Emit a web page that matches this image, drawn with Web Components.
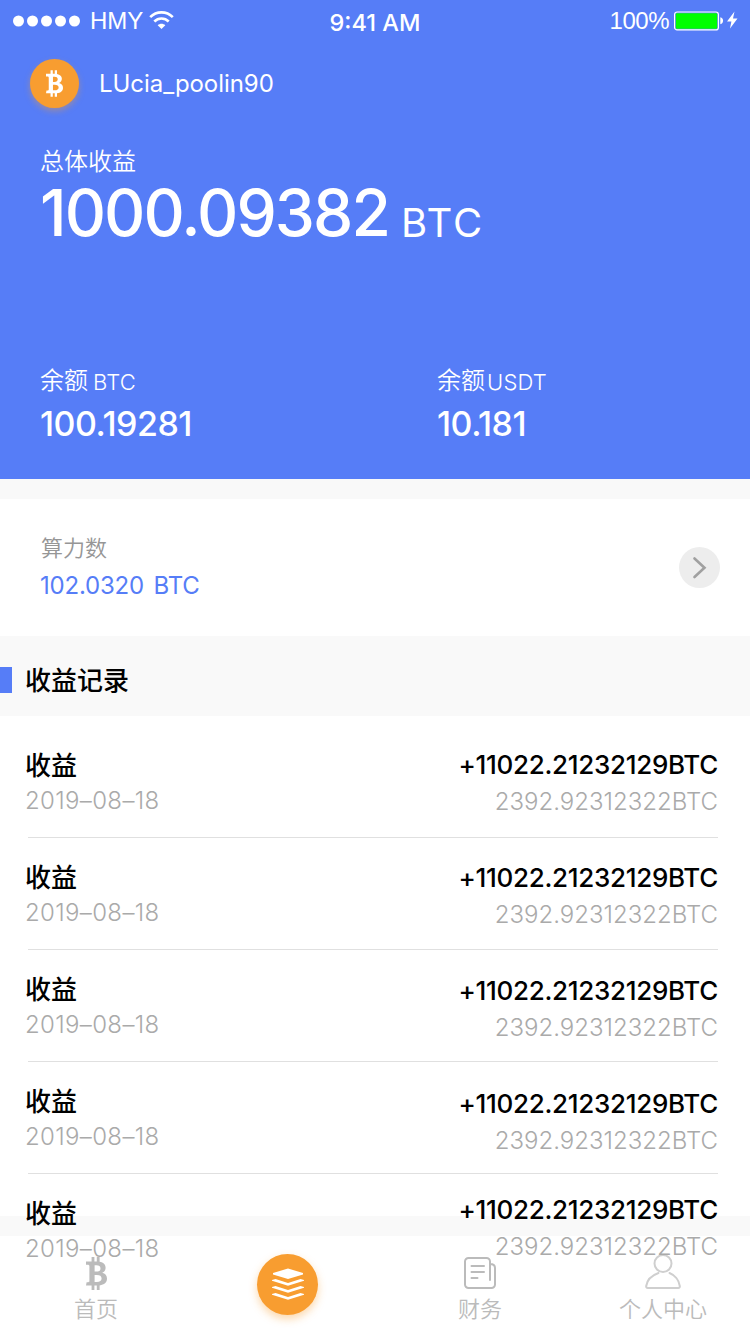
<!DOCTYPE html>
<html lang="zh-CN">
<head>
<meta charset="utf-8">
<title>收益</title>
<style>
  html, body {
    margin: 0;
    background: #fff;
  }

  body {
    width: 750px;
    height: 1334px;
    overflow: hidden;
    font-family: Inter, "Liberation Sans", sans-serif;
    --blue: #567df7;
    --orange: #f89d30;
    --panel: #f9f9f9;
    --cjk: "Noto Sans CJK SC", sans-serif;
  }
</style>
</head>
<body>
<wallet-page>
  <wallet-header slot="header" user="LUcia_poolin90" label="总体收益" total="1000.09382" unit="BTC">
    <wallet-balance label="余额" unit="BTC" gap="5" amount="100.19281"></wallet-balance>
    <wallet-balance label="余额" unit="USDT" gap="2" amount="10.181"></wallet-balance>
  </wallet-header>
  <hash-card slot="card" label="算力数">102.0320 BTC</hash-card>
  <section-title slot="title">收益记录</section-title>
  <income-row date="2019–08–18" amount="+11022.21232129BTC" sub="2392.92312322BTC">收益</income-row>
  <income-row date="2019–08–18" amount="+11022.21232129BTC" sub="2392.92312322BTC" style="--shift: 1px">收益</income-row>
  <income-row date="2019–08–18" amount="+11022.21232129BTC" sub="2392.92312322BTC" style="--shift: 2px">收益</income-row>
  <income-row date="2019–08–18" amount="+11022.21232129BTC" sub="2392.92312322BTC" style="--shift: 3px">收益</income-row>
  <income-row date="2019–08–18" amount="+11022.21232129BTC" sub="2392.92312322BTC" style="--shift: -3px">收益</income-row>
  <tab-bar slot="tabs">
    <tab-item icon="coin">首页</tab-item>
    <tab-item icon="layers" active></tab-item>
    <tab-item icon="news">财务</tab-item>
    <tab-item icon="person">个人中心</tab-item>
  </tab-bar>
</wallet-page>

<script>
const coin = `
  <svg class="coin" viewBox="0 0 21 33" fill="currentColor">
    <path fill-rule="evenodd" d="M0 4.5H5.6V0H8.4V4.5H10.8V0H13.6V4.8C17.4 5.5 19.6 7.6 19.6 10.7C19.6 13.1 18.3 14.9 16.2 15.8C19.2 16.6 21 18.7 21 21.6C21 25.5 18.3 27.9 13.6 28.4V33H10.8V28.5H8.4V33H5.6V28.5H0L.6 25.2H2.2C3 25.2 3.4 24.8 3.4 24V9.3C3.4 8.3 2.8 7.8 1.7 7.8H0ZM8.6 8.3V14.6H10.4C13 14.6 14.5 13.5 14.5 11.4C14.5 9.3 13 8.3 10.4 8.3ZM8.6 18V24.9H10.8C13.9 24.9 15.6 23.7 15.6 21.4C15.6 19.2 13.9 18 10.8 18Z"/>
  </svg>`

const icons = {
  coin,
  layers: `
    <svg width="32" height="33" viewBox="0 0 32 33" fill="#fff">
      <path d="M16 .5L31 5V6.500L16 11L1 6.500V5Z"/>
      <path d="M0 12L3.500 11L16 15L28.500 11L32 12V12.700L16 17.700L0 12.700Z"/>
      <path d="M0 19L3.500 18L16 22L28.500 18L32 19V19.700L16 24.700L0 19.700Z"/>
      <path d="M0 26L3.500 25L16 29L28.500 25L32 26V26.700L16 31.700L0 26.700Z"/>
    </svg>`,
  news: `
    <svg width="32" height="32" viewBox="0 0 32 32" fill="none" stroke="currentColor" stroke-width="2" stroke-linecap="round">
      <path d="M26 7V4.500A3.500 3.500 0 0 0 22.500 1H4.500A3.500 3.500 0 0 0 1 4.500V27.500A3.500 3.500 0 0 0 4.500 31H27.500A3.500 3.500 0 0 0 31 27.500V11C31 8.500 29.500 7 26 7V23"/>
      <path d="M7.500 9H20M7.500 15H20M7.500 21H13.500"/>
    </svg>`,
  person: `
    <svg width="36" height="35" viewBox="0 0 36 35" fill="none" stroke="#cfcfcf" stroke-width="2" stroke-linecap="round">
      <circle cx="18" cy="9.500" r="8.500"/>
      <path d="M13.500 19C6.500 21.500 2 26.500 1.200 32C1 33.300 1.500 34 2.800 34H33.200C34.500 34 35 33.300 34.800 32C33.900 26 29.500 21 24.500 19"/>
    </svg>`
}

class WalletPage extends HTMLElement {
  constructor() {
    super()
    this.attachShadow({ mode: 'open' })
    this.shadowRoot.innerHTML = `
      <style>
        :host {
          display: block;
          position: relative;
          height: 1334px;
          overflow: hidden;
        }

        #list {
          position: relative;
          z-index: 1;
        }

        ::slotted(tab-bar) {
          position: absolute;
          left: 0;
          right: 0;
          bottom: 0;
        }
      </style>
      <slot name="header"></slot>
      <slot name="card"></slot>
      <slot name="title"></slot>
      <div id="list"><slot></slot></div>
      <slot name="tabs"></slot>
    `
  }
}

class StatusBar extends HTMLElement {
  constructor() {
    super()
    this.attachShadow({ mode: 'open' })
    this.shadowRoot.innerHTML = `
      <style>
        :host {
          display: grid;
          grid-template-columns: 1fr auto 1fr;
          height: 40px;
          padding: 0 10px 0 13px;
          font: 24px/36px "Liberation Sans", sans-serif;
          color: #fff;
        }

        div {
          display: flex;
          align-items: center;
          height: 41px;
        }

        #right {
          justify-content: flex-end;
        }

        #time {
          margin-left: -3px;
          font: 500 23.5px/46px Inter, sans-serif;
        }

        #carrier {
          margin: 0 6px 0 10px;
        }

        #power {
          margin-right: 5px;
          letter-spacing: -0.5px;
        }
      </style>
      <div>
        <svg width="67" height="12" fill="#fff">
          <circle cx="5.500" cy="6" r="5.500"/><circle cx="19.500" cy="6" r="5.500"/>
          <circle cx="33.500" cy="6" r="5.500"/><circle cx="47.500" cy="6" r="5.500"/>
          <circle cx="61.500" cy="6" r="5.500"/>
        </svg>
        <span id="carrier">HMY</span>
        <svg width="25" height="19" viewBox="0 0 25 19" fill="none" stroke="#fff" stroke-width="2.600">
          <path d="M1.200 6.200C7.500-.2 17.500-.2 23.800 6.200"/>
          <path d="M5.300 10.500C9.300 6.500 15.700 6.500 19.700 10.500"/>
          <path d="M12.500 18L8.700 14.200C10.800 12.200 14.200 12.200 16.300 14.200Z" fill="#fff" stroke="none"/>
        </svg>
      </div>
      <span id="time">9:41 AM</span>
      <div id="right">
        <span id="power">100%</span>
        <svg width="66" height="20" viewBox="0 0 66 20">
          <rect x=".6" y="1" width="43.800" height="17.900" rx="2.500" fill="none" stroke="#fff" stroke-width="1.200"/>
          <rect x="1.800" y="2.200" width="41.400" height="15.500" rx="1" fill="#0f0"/>
          <path d="M46.300 6.300C50 7 50 12.500 46.300 13.200Z" fill="#fff"/>
          <path d="M60.500 .5L53 10.500H57.400L56 17.500L63.500 7.500H59Z" fill="#fff"/>
        </svg>
      </div>
    `
  }
}

class WalletHeader extends HTMLElement {
  constructor() {
    super()
    this.attachShadow({ mode: 'open' })
    this.shadowRoot.innerHTML = `
      <style>
        :host {
          display: block;
          box-sizing: border-box;
          height: 479px;
          background: var(--blue);
          color: #fff;
        }

        #user {
          display: flex;
          align-items: center;
          gap: 20px;
          height: 49px;
          padding: 19px 0 0 30px;
          font-size: 24px;
          line-height: 32px;
          letter-spacing: -0.05px;
        }

        #avatar {
          display: grid;
          place-items: center;
          width: 49px;
          height: 49px;
          border-radius: 50%;
          background: var(--orange);
          box-shadow: 0 3px 6px rgba(248, 157, 48, 0.4);
        }

        .coin {
          width: 17px;
          height: 27px;
        }

        #label {
          margin: 37px 0 0 40px;
          font: 350 24px/30px var(--cjk);
        }

        #total {
          display: flex;
          gap: 12px;
          height: 74px;
          padding-left: 40px;
          line-height: 75px;
        }

        #amount {
          font-size: 64px;
          font-weight: 500;
          letter-spacing: -1.9px;
        }

        #unit {
          font-size: 40px;
          line-height: 96px;
          letter-spacing: 1.7px;
        }

        #balances {
          display: grid;
          grid-template-columns: 397px 1fr;
          padding: 116px 0 0 40px;
        }
      </style>
      <status-bar></status-bar>
      <div id="user">
        <span id="avatar">${coin}</span>
        <span>${this.getAttribute('user')}</span>
      </div>
      <div id="label">${this.getAttribute('label')}</div>
      <div id="total">
        <span id="amount">${this.getAttribute('total')}</span>
        <span id="unit">${this.getAttribute('unit')}</span>
      </div>
      <div id="balances"><slot></slot></div>
    `
  }
}

class WalletBalance extends HTMLElement {
  constructor() {
    super()
    this.attachShadow({ mode: 'open' })
    this.shadowRoot.innerHTML = `
      <style>
        :host {
          display: block;
        }

        #top {
          display: flex;
          gap: ${this.getAttribute('gap')}px;
          height: 30px;
          font-size: 22px;
          font-weight: 300;
          line-height: 35px;
          letter-spacing: 0.2px;
        }

        #label {
          font: 350 24px/28px var(--cjk);
          letter-spacing: 0;
        }

        #amount {
          font-size: 34px;
          font-weight: 500;
          line-height: 58px;
          letter-spacing: -0.5px;
        }
      </style>
      <div id="top">
        <span id="label">${this.getAttribute('label')}</span>
        <span id="unit">${this.getAttribute('unit')}</span>
      </div>
      <div id="amount">${this.getAttribute('amount')}</div>
    `
  }
}

class HashCard extends HTMLElement {
  constructor() {
    super()
    this.attachShadow({ mode: 'open' })
    this.shadowRoot.innerHTML = `
      <style>
        :host {
          display: flex;
          align-items: center;
          justify-content: space-between;
          box-sizing: border-box;
          height: 157px;
          padding: 0 30px 0 40px;
          border-top: 20px solid var(--panel);
          background: #fff;
        }

        #label {
          font: 350 22px/36px var(--cjk);
          color: #969696;
          padding-left: 1px;
        }

        #value {
          font-size: 24px;
          line-height: 44px;
          color: var(--blue);
          letter-spacing: -0.2px;
          word-spacing: 3px;
        }
      </style>
      <div>
        <div id="label">${this.getAttribute('label')}</div>
        <div id="value"><slot></slot></div>
      </div>
      <svg width="41" height="41" viewBox="0 0 41 41" fill="none">
        <circle cx="20.500" cy="20.500" r="20.500" fill="#ededed"/>
        <path d="M15.500 11.500L25.500 20.700L15.500 30" stroke="#a0a0a0" stroke-width="2.600" stroke-linecap="round"/>
      </svg>
    `
  }
}

class SectionTitle extends HTMLElement {
  constructor() {
    super()
    this.attachShadow({ mode: 'open' })
    this.shadowRoot.innerHTML = `
      <style>
        :host {
          display: flex;
          align-items: center;
          gap: 13px;
          box-sizing: border-box;
          height: 80px;
          padding-top: 6px;
          background: var(--panel);
          font: 500 26px/40px var(--cjk);
          color: #000;
        }

        :host::before {
          content: "";
          width: 12px;
          height: 26px;
          margin-top: 2px;
          background: var(--blue);
        }
      </style>
      <slot></slot>
    `
  }
}

class IncomeRow extends HTMLElement {
  constructor() {
    super()
    this.attachShadow({ mode: 'open' })
    this.shadowRoot.innerHTML = `
      <style>
        :host {
          display: flex;
          justify-content: space-between;
          box-sizing: border-box;
          height: 112px;
          margin: 0 32px 0 28px;
          padding-top: 20px;
          border-bottom: 1px solid #e0e0e0;
        }

        :host(:first-of-type) {
          height: 122px;
          padding-top: 30px;
        }

        :host(:last-of-type) {
          border-bottom: 0;
        }

        #left {
          margin-left: -3px;
        }

        #right {
          margin: var(--shift, 0) 0 0;
          text-align: right;
        }

        #name {
          font: 500 26px/36px var(--cjk);
          color: #000;
        }

        #date, #sub {
          font-size: 24px;
          font-weight: 300;
          color: #aaa;
        }

        #date {
          line-height: 38px;
          letter-spacing: 0.35px;
        }

        #sub {
          line-height: 35px;
        }

        #amount {
          font-size: 26px;
          font-weight: 500;
          line-height: 38px;
          letter-spacing: -0.3px;
          color: #000;
        }
      </style>
      <div id="left">
        <div id="name"><slot></slot></div>
        <div id="date">${this.getAttribute('date')}</div>
      </div>
      <div id="right">
        <div id="amount">${this.getAttribute('amount')}</div>
        <div id="sub">${this.getAttribute('sub')}</div>
      </div>
    `
  }
}

class TabBar extends HTMLElement {
  constructor() {
    super()
    this.attachShadow({ mode: 'open' })
    this.shadowRoot.innerHTML = `
      <style>
        :host {
          display: grid;
          grid-template-columns: 192px 192px 192px 174px;
          height: 98px;
          border-top: 20px solid var(--panel);
          background: #fff;
        }
      </style>
      <slot></slot>
    `
  }
}

class TabItem extends HTMLElement {
  constructor() {
    super()
    this.attachShadow({ mode: 'open' })
    this.shadowRoot.innerHTML = `
      <style>
        :host {
          display: flex;
          flex-direction: column;
          align-items: center;
          padding-top: 18px;
          font: 350 22px/31px var(--cjk);
          color: #bbb;
        }

        #icon {
          display: flex;
          align-items: center;
          justify-content: center;
          height: 38px;
        }

        .coin {
          width: 21px;
          height: 33px;
        }

        :host([icon="person"]) svg {
          margin-bottom: 3px;
        }

        :host([active]) #icon {
          width: 61px;
          height: 61px;
          margin-right: 1px;
          border-radius: 50%;
          background: var(--orange);
          box-shadow: 0 4px 8px rgba(248, 157, 48, 0.4);
        }
      </style>
      <div id="icon">${icons[this.getAttribute('icon')]}</div>
      <slot></slot>
    `
  }
}

customElements.define('status-bar', StatusBar)
customElements.define('wallet-page', WalletPage)
customElements.define('wallet-header', WalletHeader)
customElements.define('wallet-balance', WalletBalance)
customElements.define('hash-card', HashCard)
customElements.define('section-title', SectionTitle)
customElements.define('income-row', IncomeRow)
customElements.define('tab-bar', TabBar)
customElements.define('tab-item', TabItem)
</script>
</body>
</html>
